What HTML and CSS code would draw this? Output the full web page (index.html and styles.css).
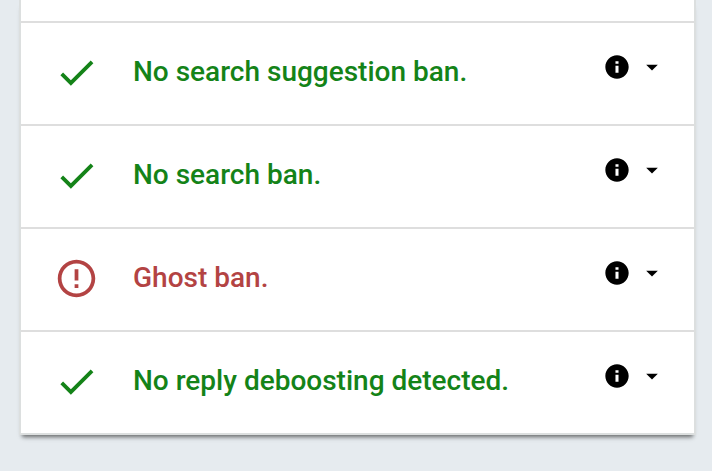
FILE: index.html
```html
<!DOCTYPE html>
<html lang="en">
<head>
  <meta charset="UTF-8">
  <meta name="viewport" content="width=device-width, initial-scale=1">
  <title>Ban check results</title>
  <link rel="stylesheet" href="styles.css">
</head>
<body>
  <svg class="sprite" aria-hidden="true">
    <symbol id="check" viewBox="0 0 24 24"><path d="M9 16.17L4.83 12l-1.42 1.41L9 19 21 7l-1.41-1.41z"/></symbol>
    <symbol id="error" viewBox="0 0 24 24"><path d="M11 15h2v2h-2zm0-8h2v6h-2zm.99-5C6.47 2 2 6.48 2 12s4.47 10 9.99 10C17.52 22 22 17.52 22 12S17.52 2 11.99 2zM12 20c-4.42 0-8-3.58-8-8s3.58-8 8-8 8 3.58 8 8-3.58 8-8 8z"/></symbol>
    <symbol id="info" viewBox="0 0 24 24"><path d="M12 2C6.48 2 2 6.48 2 12s4.48 10 10 10 10-4.48 10-10S17.52 2 12 2zm1.3 15h-2.6v-6h2.6v6zm0-7.7h-2.6V7h2.6v2.3z"/></symbol>
    <symbol id="arrow" viewBox="0 0 24 24"><path d="M7 10l5 5 5-5z"/></symbol>
  </svg>

  <main class="card">
    <ul class="results">
      <li class="result ok">
        <svg class="status"><use href="#check"/></svg>
        <span class="text">No search suggestion ban.</span>
        <button class="more" type="button" aria-label="More about search suggestion ban">
          <svg><use href="#info"/></svg>
          <svg><use href="#arrow"/></svg>
        </button>
      </li>
      <li class="result ok">
        <svg class="status"><use href="#check"/></svg>
        <span class="text">No search ban.</span>
        <button class="more" type="button" aria-label="More about search ban">
          <svg><use href="#info"/></svg>
          <svg><use href="#arrow"/></svg>
        </button>
      </li>
      <li class="result fail">
        <svg class="status"><use href="#error"/></svg>
        <span class="text">Ghost ban.</span>
        <button class="more" type="button" aria-label="More about ghost ban">
          <svg><use href="#info"/></svg>
          <svg><use href="#arrow"/></svg>
        </button>
      </li>
      <li class="result ok">
        <svg class="status"><use href="#check"/></svg>
        <span class="text">No reply deboosting detected.</span>
        <button class="more" type="button" aria-label="More about reply deboosting">
          <svg><use href="#info"/></svg>
          <svg><use href="#arrow"/></svg>
        </button>
      </li>
    </ul>
  </main>
</body>
</html>
```

FILE: styles.css
```css
* { box-sizing: border-box; }
body {
  margin: 0;
  padding: 0 16px 36px 19px;
  background: #e6ebef;
  font-family: Roboto, sans-serif;
}
.sprite { display: none; }
.card {
  padding-top: 21px;
  background: #fff;
  border: 2px solid #dcdfdf;
  border-top: none;
  box-shadow: 0 5px 4px -3px rgba(0, 0, 0, 0.5), 0 6px 6px -4px rgba(0, 0, 0, 0.1);
}
.results { list-style: none; margin: 0; padding: 0; }
.result {
  display: flex;
  align-items: center;
  min-height: 103px;
  padding: 0 28px 0 33px;
  border-top: 2px solid #dedede;
}
.ok { color: #148318; }
.fail { color: #b34343; }
.status {
  flex: none;
  width: 45px;
  height: 45px;
  margin-bottom: 2px;
  fill: currentColor;
}
.text {
  flex: 1;
  margin: 0 16px 4px 34px;
  font-size: 28px;
  font-weight: 500;
  line-height: 36px;
}
.more {
  display: flex;
  gap: 7px;
  margin-bottom: 13px;
  padding: 0;
  border: none;
  background: none;
  color: #000;
  cursor: pointer;
}
.more svg { width: 28px; height: 28px; fill: currentColor; }
```
